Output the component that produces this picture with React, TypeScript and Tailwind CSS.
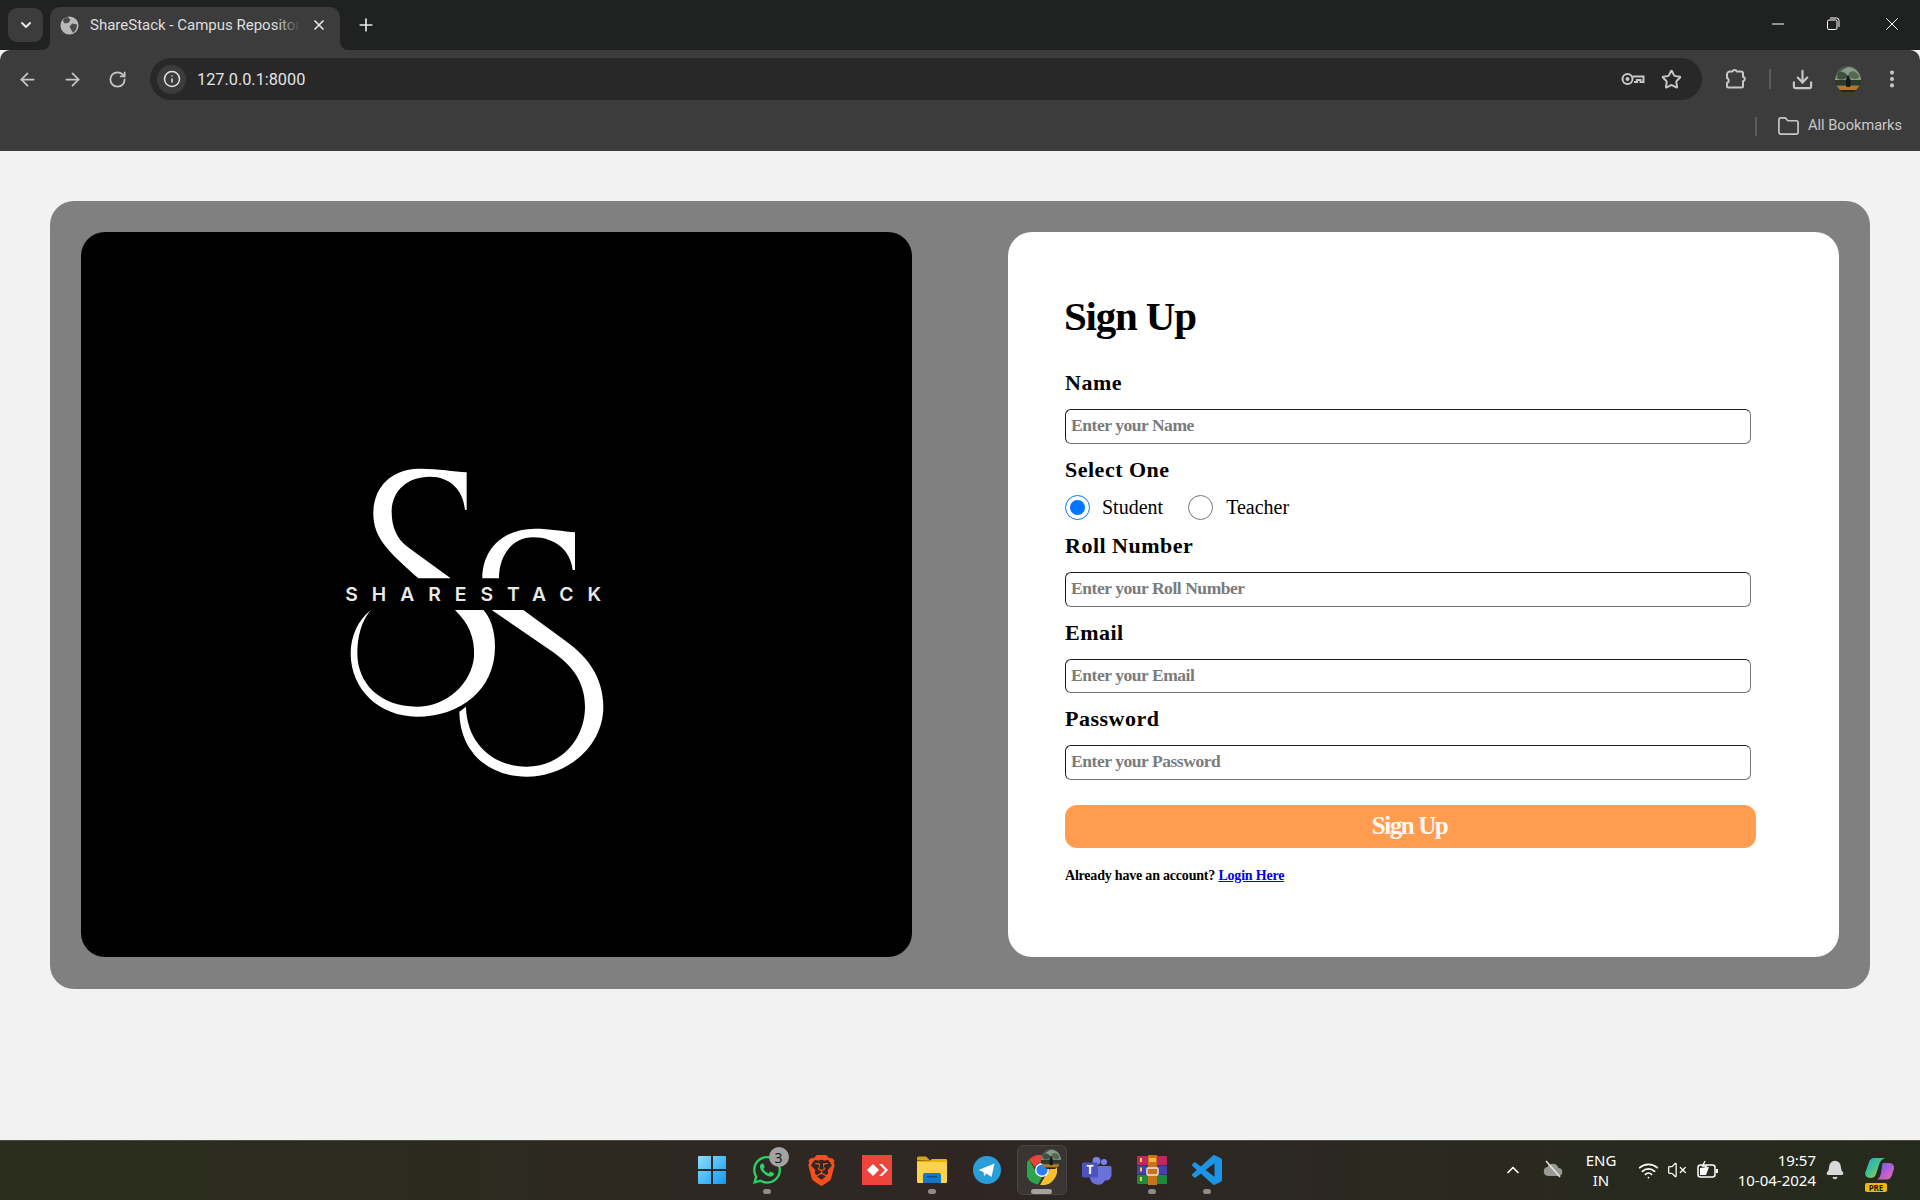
import { ArrowLeft, ArrowRight, Bell, ChevronDown, ChevronUp, EllipsisVertical, Folder, Info, Plus, RotateCw, Star, VolumeX, Wifi, X, Download } from 'lucide-react';
import { FaWhatsapp } from 'react-icons/fa';
import { SiBrave } from 'react-icons/si';

const fields = {
  name: 'Enter your Name',
  roll: 'Enter your Roll Number',
  email: 'Enter your Email',
  password: 'Enter your Password',
};

const Avatar = ({ size }: { size: number }) => (
  <svg width={size} height={size} viewBox="0 0 26 26">
    <circle cx="13" cy="13" r="13" fill="#4c5c4c" />
    <path d="M0 13C4 5 9 3 13 1c6 0 11 4 13 12v2H0z" fill="#8a9a8a" />
    <path d="M3 7c3-2 5-1 7 0s3 3 1 5-7 2-9 0z" fill="#3f5240" />
    <path d="M15 6c3-2 7 0 9 4 1 3-5 4-8 2s-3-4-1-6z" fill="#56694f" />
    <path d="M0 14h26v5H0z" fill="#2c3a2a" />
    <path d="M2 20h22a13 13 0 0 1-3 4H5a13 13 0 0 1-3-4z" fill="#b87a1a" />
    <rect x="11" y="12" width="4.5" height="9" rx="1.5" fill="#171722" />
    <circle cx="13" cy="11" r="1.6" fill="#171722" />
    <path d="M5 24h16a13 13 0 0 1-16 0z" fill="#2a2418" />
  </svg>
);

const Logo = () => (
  <svg width="300" height="340" viewBox="0 0 900 1020">
    <g fill="#fff">
      <path d="M440 67C400 65 350 55 295 56 210 58 160 115 160 190c0 75 45 115 135 195h97L262 290c-32-25-47-60-47-105 0-60 45-105 115-105 60 0 100 40 105 100h5z" />
      <path d="M765 247c-35-3-75-11-120-11-95 0-158 60-158 149h50c0-70 40-123 103-123 65 0 112 40 118 98h7z" />
      <path d="M153 480c-40 30-61 80-61 130 0 110 88 190 198 190 130 0 235-80 235-210 0-50-15-90-35-110h-85c40 40 60 80 57 140-7 80-82 150-172 150-110 0-178-70-178-160 0-50 13-100 41-130z" />
      <path d="M515 480h95l130 95c70 50 110 115 110 195 0 120-110 210-230 210-110 0-200-70-202-195l20-15c2 110 82 180 182 180s175-80 175-180c0-80-45-130-105-170z" />
    </g>
    <text x="76" y="452" textLength="767" lengthAdjust="spacing" fill="#e8e8e8" className="font-['Inter'] text-[58px] font-semibold">SHARESTACK</text>
  </svg>
);

const Field = ({ label, placeholder, type = 'text' }: { label: string; placeholder: string; type?: string }) => (
  <>
    <label className="mb-[13px] block text-[22px] leading-[26px] font-bold tracking-[0.5px] text-black">{label}</label>
    <input
      type={type}
      placeholder={placeholder}
      className="mb-[13px] block h-[34.5px] w-[686px] rounded-[6px] border border-t-[#1c1c1c] border-r-[#767676] border-b-[#767676] border-l-[#1c1c1c] bg-white pr-[6px] pb-[1px] pl-[5px] text-[17.5px] font-bold tracking-[-0.45px] placeholder:text-[#7b7b7b] focus:outline-none"
    />
  </>
);

const TaskIcon = ({ children, dot, active }: { children: React.ReactNode; dot?: boolean; active?: boolean }) => (
  <div className="relative flex h-[58px] w-[55px] items-center justify-center">
    {active && <div className="absolute top-[4px] left-[2.5px] h-[50px] w-[50px] rounded-[6px] border border-[#4a4442] bg-[#3a3432]" />}
    <div className="relative flex items-center justify-center">{children}</div>
    {dot && <div className="absolute bottom-[5px] left-[24px] h-[5px] w-[8px] rounded-full bg-[#8f8b88]" />}
    {active && <div className="absolute bottom-[5px] left-[17px] h-[5px] w-[21px] rounded-full bg-[#a5a19e]" />}
  </div>
);

const App = () => {
  return (
    <div className="flex h-screen flex-col overflow-hidden bg-[#f2f2f2] font-['Liberation_Serif',serif]">
      {/* Browser chrome */}
      <div className="flex h-[50px] shrink-0 bg-[#202221] font-['Roboto',sans-serif]">
        <div className="mt-[8px] ml-[8px] flex h-[34px] w-[35px] items-center justify-center rounded-[9px] bg-[#3c3c3c]">
          <ChevronDown className="h-[16px] w-[16px] text-[#e8e8e8]" strokeWidth={3} />
        </div>
        <div className="relative mt-[7px] ml-[7px] flex h-[43px] w-[290px] items-center rounded-t-[10px] bg-[#3c3c3c] pb-[7px] pl-[10px]">
          <div className="absolute bottom-0 -left-[8px] h-[8px] w-[8px] bg-[#3c3c3c]">
            <div className="h-full w-full rounded-br-[8px] bg-[#202221]" />
          </div>
          <div className="absolute -right-[8px] bottom-0 h-[8px] w-[8px] bg-[#3c3c3c]">
            <div className="h-full w-full rounded-bl-[8px] bg-[#202221]" />
          </div>
          <svg width="19" height="19" viewBox="0 0 20 20" className="shrink-0">
            <circle cx="10" cy="10" r="9.5" fill="#b9b9b9" />
            <path d="M8 1 11 4 9 7 5 8 3 5 5 2zM13 8l5 1-1 5-3 4-2-3-2-4z" fill="#4a4a4a" />
          </svg>
          <div className="relative ml-[11px] w-[210px] overflow-hidden text-[15px] whitespace-nowrap text-[#dedede]">
            ShareStack - Campus Repository
            <div className="absolute top-0 right-0 h-full w-[24px] bg-gradient-to-r from-transparent to-[#3c3c3c]" />
          </div>
          <X className="ml-[11px] h-[16px] w-[16px] text-[#e8e8e8]" strokeWidth={2.5} />
        </div>
        <div className="mt-[14px] ml-[15px] flex h-[22px] w-[22px] items-center justify-center">
          <Plus className="h-[20px] w-[20px] text-[#e8e8e8]" strokeWidth={2} />
        </div>
        <div className="ml-auto flex h-[48px] items-center text-white">
          <div className="flex w-[57px] justify-center">
            <svg width="14" height="14" viewBox="0 0 14 14"><path d="M1 7h12" stroke="currentColor" /></svg>
          </div>
          <div className="flex w-[57px] justify-center">
            <svg width="14" height="14" viewBox="0 0 14 14" fill="none" stroke="currentColor" className="mr-[3px]">
              <rect x="1.5" y="3" width="9.5" height="9.5" rx="1.5" />
              <path d="M4 1h6.5A2.5 2.5 0 0 1 13 3.5V10" />
            </svg>
          </div>
          <div className="flex w-[57px] justify-center">
            <svg width="14" height="14" viewBox="0 0 14 14"><path d="M1 1l12 12M13 1 1 13" stroke="currentColor" /></svg>
          </div>
        </div>
      </div>

      <div className="h-[101px] shrink-0 rounded-t-[10px] bg-[#3c3c3c] font-['Roboto',sans-serif] text-[#c7c7c7]">
        <div className="flex h-[58px] items-center pl-[4px]">
          <div className="flex w-[46px] justify-center"><ArrowLeft className="h-[21px] w-[21px]" strokeWidth={2} /></div>
          <div className="flex w-[45px] justify-center"><ArrowRight className="h-[21px] w-[21px]" strokeWidth={2} /></div>
          <div className="flex w-[45px] justify-center"><RotateCw className="h-[19px] w-[19px]" strokeWidth={2.25} /></div>
          <div className="ml-[10px] flex h-[42px] flex-1 items-center rounded-full bg-[#282828] pr-[20px] pl-[7px]">
            <div className="flex h-[29px] w-[29px] items-center justify-center rounded-full bg-[#3c3c3c]">
              <Info className="h-[18px] w-[18px] text-[#e3e3e3]" strokeWidth={2} />
            </div>
            <span className="mt-[2px] ml-[11px] text-[16.3px] text-[#e3e3e3]">127.0.0.1:8000</span>
            <svg width="24" height="16" viewBox="0 0 24 16" fill="none" stroke="currentColor" strokeWidth="2" className="ml-auto">
              <circle cx="6.5" cy="8" r="5" />
              <circle cx="6.5" cy="8" r="1" fill="currentColor" />
              <path d="M11.5 5.5H22.5V11H19.5V9H16V11H13" />
            </svg>
            <Star className="ml-[16px] h-[21px] w-[21px]" strokeWidth={2.25} />
          </div>
          <div className="flex w-[67px] justify-center pr-[2px]">
            <svg width="22" height="22" viewBox="0 0 22 22" fill="none" stroke="currentColor" strokeWidth="2" strokeLinejoin="round">
              <path d="M6 3.5h2.5a2.2 2.2 0 0 1 4.2 0h4.3a2 2 0 0 1 2 2v3.2a2.3 2.3 0 0 1 0 4.5V18a1.5 1.5 0 0 1-1.5 1.5H4.5A1.5 1.5 0 0 1 3 18v-3.2c2.2 0 2.2-4.6 0-4.6V6.5a3 3 0 0 1 3-3z" />
            </svg>
          </div>
          <div className="h-[20px] w-[2px] bg-[#5c5c5c]" />
          <div className="flex w-[62px] justify-center"><Download className="h-[23px] w-[23px]" strokeWidth={2.25} /></div>
          <div className="flex w-[30px] justify-center"><Avatar size={26} /></div>
          <div className="flex w-[57px] justify-center"><EllipsisVertical className="h-[22px] w-[22px]" strokeWidth={2.5} /></div>
        </div>
        <div className="flex h-[43px] items-center justify-end pr-[18px] pb-[7px]">
          <div className="h-[19px] w-[2px] bg-[#5c5c5c]" />
          <Folder className="ml-[20px] h-[23px] w-[23px]" strokeWidth={1.75} />
          <span className="ml-[8px] text-[14.6px] text-[#c8c8c8]">All Bookmarks</span>
        </div>
      </div>

      {/* Page */}
      <div className="flex-1">
        <div className="mx-[50px] mt-[50px] grid h-[788px] grid-cols-2 gap-[96px] rounded-[24px] bg-[#808080] px-[31px] pt-[31px] pb-[32px]">
          <div className="rounded-[24px] bg-black pt-[218px] pl-[239px]">
            <Logo />
          </div>
          <div className="rounded-[24px] bg-white pt-[61px] pl-[57px]">
            <h1 className="mb-[31px] -ml-[1px] text-[41px] leading-[46px] font-bold tracking-[-1.2px] text-black">Sign Up</h1>
            <Field label="Name" placeholder={fields.name} />
            <label className="mb-[12px] block text-[22px] leading-[26px] font-bold tracking-[0.5px] text-black">Select One</label>
            <div className="mb-[13.5px] flex h-[25px] items-center text-[20px] text-black">
              <input type="radio" name="role" defaultChecked className="m-0 h-[25px] w-[25px]" />
              <span className="ml-[12px]">Student</span>
              <input type="radio" name="role" className="m-0 ml-[25px] h-[25px] w-[25px]" />
              <span className="ml-[13px]">Teacher</span>
            </div>
            <Field label="Roll Number" placeholder={fields.roll} />
            <Field label="Email" placeholder={fields.email} type="email" />
            <Field label="Password" placeholder={fields.password} type="password" />
            <button className="mt-[25px] block h-[43px] w-[691px] rounded-[12px] bg-[#ff9c50] pr-[2px] text-[25px] font-bold tracking-[-1.4px] text-[#fff8f0]">Sign Up</button>
            <p className="mt-[19px] text-[14px] leading-[18px] font-bold tracking-[-0.2px] text-black">
              Already have an account? <a href="#login" className="text-[#0000ee] underline">Login Here</a>
            </p>
          </div>
        </div>
      </div>

      {/* Taskbar */}
      <div className="flex h-[60px] shrink-0 border-t border-[#4b4c42] bg-gradient-to-r from-[#2a2e1b] via-[#2f2624] to-[#252b1c] pl-[684px] font-['Noto_Sans',sans-serif] text-white">
        <TaskIcon>
          <svg width="30" height="30" viewBox="0 0 30 30">
            <defs>
              <linearGradient id="win" x1="0" y1="0" x2="1" y2="1">
                <stop offset="0" stopColor="#8fdcfb" />
                <stop offset="1" stopColor="#0f9af5" />
              </linearGradient>
            </defs>
            <path d="M1 2a1 1 0 0 1 1-1h12v13H1zM16 1h12a1 1 0 0 1 1 1v12H16zM1 16h13v13H2a1 1 0 0 1-1-1zM16 16h13v12a1 1 0 0 1-1 1H16z" fill="url(#win)" />
          </svg>
        </TaskIcon>
        <TaskIcon dot>
          <FaWhatsapp className="h-[32px] w-[32px] text-[#25d366]" />
          <div className="absolute -top-[7px] left-[18px] flex h-[20px] w-[20px] items-center justify-center rounded-full bg-[#a3a3a3] text-[14px] text-[#1a1a1a]">3</div>
        </TaskIcon>
        <TaskIcon>
          <SiBrave className="h-[31px] w-[31px] text-[#f4501e]" />
        </TaskIcon>
        <TaskIcon>
          <svg width="30" height="30" viewBox="0 0 30 30">
            <rect width="30" height="30" fill="#ef443b" />
            <path d="M11 9l6 6-6 6-6-6z" fill="#fff" />
            <path d="M17 9l6 6-6 6 3 0 6-6-6-6z" fill="#fff" />
          </svg>
        </TaskIcon>
        <TaskIcon dot>
          <svg width="30" height="30" viewBox="0 0 30 30">
            <path d="M0 3a1.5 1.5 0 0 1 1.5-1.5H9l4 4h-13z" fill="#d9a315" />
            <path d="M0 6h30v21a1 1 0 0 1-1 1H1a1 1 0 0 1-1-1z" fill="#fcd34d" />
            <path d="M0 6l13-.5 2-1.5h14a1 1 0 0 1 1 1v2H0z" fill="#eab308" />
            <path d="M6 20a2 2 0 0 1 2-2h14a2 2 0 0 1 2 2v8H6z" fill="#1177cc" />
            <rect x="10" y="21" width="10" height="1.5" fill="#0b4f8a" />
          </svg>
        </TaskIcon>
        <TaskIcon>
          <svg width="28" height="28" viewBox="0 0 28 28">
            <circle cx="14" cy="14" r="14" fill="#2a9ed8" />
            <path d="M5.5 14 21.5 7.5 18.5 21 13.5 17.5 11 20 10.5 16z" fill="#fff" />
          </svg>
        </TaskIcon>
        <TaskIcon active>
          <svg width="30" height="30" viewBox="0 0 30 30">
            <path d="M15 0a15 15 0 0 1 13 7.5H15a7.5 7.5 0 0 0-7 4.8L2 4.8A15 15 0 0 1 15 0z" fill="#e5453a" />
            <path d="M2 4.8l6.5 11A7.5 7.5 0 0 0 15 22.5l-4 7A15 15 0 0 1 2 4.8z" fill="#2ea44f" />
            <path d="M28 7.5A15 15 0 0 1 13 30l6.5-11A7.5 7.5 0 0 0 21 7.5z" fill="#fbc02d" />
            <circle cx="15" cy="15" r="7" fill="#fff" />
            <circle cx="15" cy="15" r="5.6" fill="#2c7ef2" />
          </svg>
          <div className="absolute -top-[6px] left-[14px]"><Avatar size={20} /></div>
        </TaskIcon>
        <TaskIcon>
          <svg width="30" height="30" viewBox="0 0 30 30">
            <circle cx="22" cy="7" r="3" fill="#7b83eb" />
            <circle cx="14.5" cy="6" r="4" fill="#7b83eb" />
            <path d="M17 11h11a1.5 1.5 0 0 1 1.5 1.5V20a5.5 5.5 0 0 1-6.5 5.5A8 8 0 0 1 8 22V12a1 1 0 0 1 1-1z" fill="#6a71d8" />
            <rect x="0" y="7.5" width="16" height="15" rx="1.5" fill="#4b53bc" />
            <text x="8" y="19" textAnchor="middle" fill="#fff" className="font-['Noto_Sans'] text-[12px] font-bold">T</text>
          </svg>
        </TaskIcon>
        <TaskIcon dot>
          <svg width="30" height="30" viewBox="0 0 30 30">
            <rect x="0" y="1" width="30" height="9" rx="1" fill="#c4275f" />
            <rect x="0" y="10.5" width="30" height="9" fill="#4a3eb0" />
            <rect x="0" y="20" width="30" height="9" rx="1" fill="#1e8a3e" />
            <rect x="3" y="3" width="2" height="4" fill="#f5d442" />
            <rect x="3" y="12.5" width="2" height="4" fill="#f5d442" />
            <rect x="3" y="22" width="2" height="4" fill="#f5d442" />
            <rect x="11" y="0" width="9" height="30" fill="#c8741f" />
            <rect x="10" y="13" width="11" height="7" rx="1" fill="none" stroke="#e6e6e6" strokeWidth="1.5" />
            <rect x="12" y="3" width="7" height="4" fill="#f0b840" />
          </svg>
        </TaskIcon>
        <TaskIcon dot>
          <svg width="30" height="30" viewBox="0 0 24 24">
            <path d="M23.15 2.587 18.21.21a1.494 1.494 0 0 0-1.705.29l-9.46 8.63-4.12-3.128a.999.999 0 0 0-1.276.057L.327 7.261A1 1 0 0 0 .326 8.74L3.899 12 .326 15.26a1 1 0 0 0 .001 1.479L1.65 17.94a.999.999 0 0 0 1.276.057l4.12-3.128 9.46 8.63a1.492 1.492 0 0 0 1.704.29l4.942-2.377A1.5 1.5 0 0 0 24 20.06V3.939a1.5 1.5 0 0 0-.85-1.352zm-5.146 14.861L10.826 12l7.178-5.448v10.896z" fill="#1b95e6" />
          </svg>
        </TaskIcon>

        {/* Tray */}
        <div className="ml-auto flex h-[58px] items-center pr-[14px]">
          <div className="flex w-[40px] justify-center"><ChevronUp className="h-[20px] w-[20px]" strokeWidth={2} /></div>
          <div className="flex w-[40px] justify-center">
            <svg width="22" height="20" viewBox="0 0 22 20">
              <path d="M6 16a4.5 4.5 0 0 1-.6-8.9A6 6 0 0 1 16.5 8a4 4 0 0 1-.5 8z" fill="#9a9a94" />
              <path d="M4 1l14 16" stroke="#e8e8e8" strokeWidth="1.5" />
            </svg>
          </div>
          <div className="w-[56px] text-center text-[15px] leading-[20px]">
            <div>ENG</div>
            <div>IN</div>
          </div>
          <div className="flex w-[38px] justify-center"><Wifi className="h-[21px] w-[21px]" strokeWidth={2} /></div>
          <div className="flex w-[20px] justify-center"><VolumeX className="h-[20px] w-[20px]" strokeWidth={1.5} /></div>
          <div className="flex w-[42px] justify-center">
            <svg width="22" height="20" viewBox="0 0 22 20" fill="none" stroke="currentColor" strokeWidth="1.5">
              <rect x="1" y="5" width="17" height="12" rx="2.5" />
              <path d="M20 9v4" strokeWidth="2" />
              <path d="M3 15V8l9-1-3 8z" fill="currentColor" stroke="none" />
              <path d="M8 1 5.5 6h4L7 10" strokeWidth="1.25" />
            </svg>
          </div>
          <div className="w-[87px] text-right text-[15px] leading-[20px] whitespace-nowrap">
            <div>19:57</div>
            <div>10-04-2024</div>
          </div>
          <div className="flex w-[38px] justify-center"><Bell className="h-[20px] w-[20px] fill-[#d9d9d9] text-[#d9d9d9]" /></div>
          <div className="relative flex w-[52px] justify-center">
            <svg width="30" height="26" viewBox="0 0 30 26">
              <defs>
                <linearGradient id="cop" x1="0" y1="0" x2="1" y2="1">
                  <stop offset="0" stopColor="#1fa8e0" />
                  <stop offset="0.5" stopColor="#4cc38a" />
                  <stop offset="1" stopColor="#f2c230" />
                </linearGradient>
                <linearGradient id="cop2" x1="0" y1="0" x2="1" y2="1">
                  <stop offset="0" stopColor="#4f6fe8" />
                  <stop offset="0.5" stopColor="#b35ad8" />
                  <stop offset="1" stopColor="#f06fa0" />
                </linearGradient>
              </defs>
              <path d="M9 1h11c-3 1-5 3-6 7l-3 9c-1 3-3 4-6 4-3.500 0-5.500-3-4.500-6L4 5c.5-2 2.500-4 5-4z" fill="url(#cop)" />
              <path d="M18 6h6.500c3 0 5 2.500 4.500 5.500L27 18c-1 3-3 4.500-5.500 4.500H12c2-1 3-3 4-6l1-7c0-1.500.5-3 1-3.500z" fill="url(#cop2)" />
            </svg>
            <div className="absolute -bottom-[9px] left-[11px] h-[9px] w-[22px] rounded-[2px] bg-[#f5b800] text-center text-[8px] leading-[9px] font-bold text-[#1a1a1a]">PRE</div>
          </div>
        </div>
      </div>
    </div>
  );
};

export default App;
